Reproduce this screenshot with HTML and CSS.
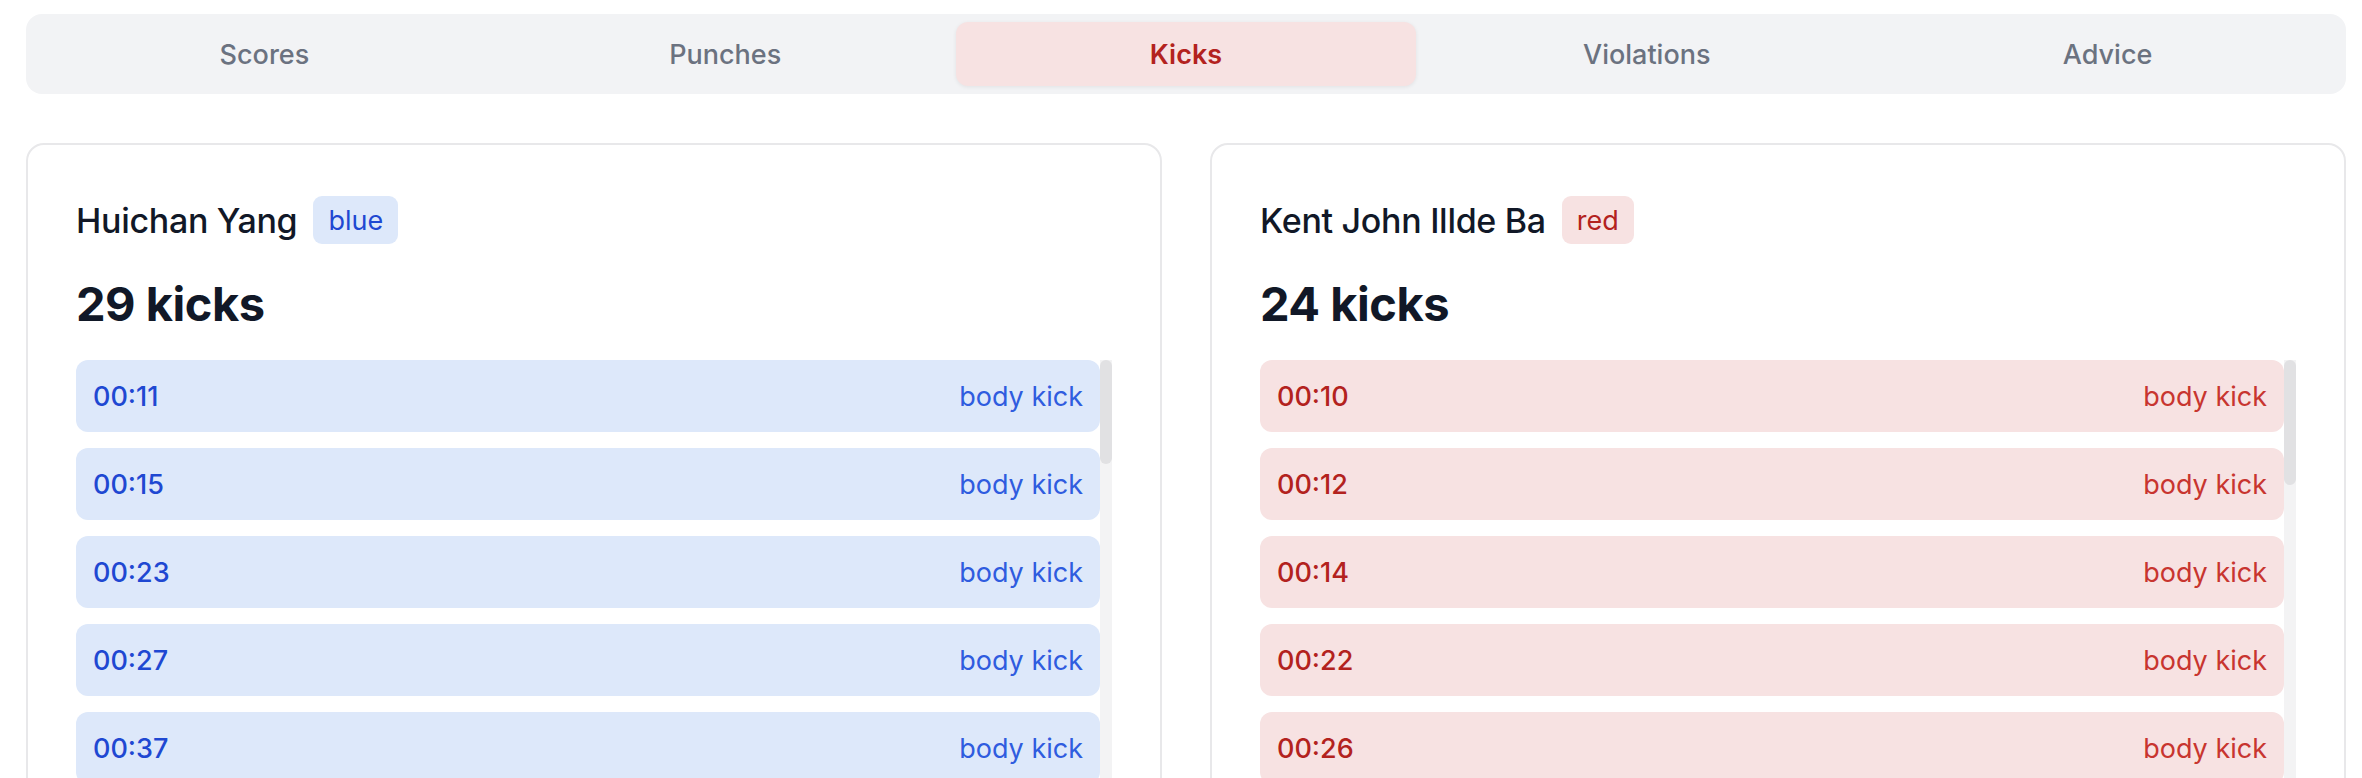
FILE: index.html
```html
<!DOCTYPE html>
<html lang="en">
<head>
<meta charset="utf-8">
<title>Kicks</title>
<link rel="stylesheet" href="styles.css">
</head>
<body>
<div class="page">
  <nav class="tabs">
    <div class="tab">Scores</div>
    <div class="tab">Punches</div>
    <div class="tab active">Kicks</div>
    <div class="tab">Violations</div>
    <div class="tab">Advice</div>
  </nav>

  <div class="cards">
    <section class="card blue">
      <div class="card-head">
        <span class="name">Huichan Yang</span>
        <span class="badge">blue</span>
      </div>
      <h2 class="count">29 kicks</h2>
      <div class="list-wrap">
        <ul class="list">
          <li class="row"><span class="time">00:11</span><span class="type">body kick</span></li>
          <li class="row"><span class="time">00:15</span><span class="type">body kick</span></li>
          <li class="row"><span class="time">00:23</span><span class="type">body kick</span></li>
          <li class="row"><span class="time">00:27</span><span class="type">body kick</span></li>
          <li class="row"><span class="time">00:37</span><span class="type">body kick</span></li>
          <li class="row"><span class="time">00:44</span><span class="type">body kick</span></li>
          <li class="row"><span class="time">00:52</span><span class="type">body kick</span></li>
          <li class="row"><span class="time">01:03</span><span class="type">body kick</span></li>
          <li class="row"><span class="time">01:09</span><span class="type">body kick</span></li>
          <li class="row"><span class="time">01:18</span><span class="type">body kick</span></li>
          <li class="row"><span class="time">01:26</span><span class="type">body kick</span></li>
          <li class="row"><span class="time">01:35</span><span class="type">body kick</span></li>
          <li class="row"><span class="time">01:41</span><span class="type">body kick</span></li>
          <li class="row"><span class="time">01:50</span><span class="type">body kick</span></li>
          <li class="row"><span class="time">01:58</span><span class="type">body kick</span></li>
          <li class="row"><span class="time">02:06</span><span class="type">body kick</span></li>
          <li class="row"><span class="time">02:13</span><span class="type">body kick</span></li>
          <li class="row"><span class="time">02:21</span><span class="type">body kick</span></li>
          <li class="row"><span class="time">02:30</span><span class="type">body kick</span></li>
          <li class="row"><span class="time">02:38</span><span class="type">body kick</span></li>
          <li class="row"><span class="time">02:45</span><span class="type">body kick</span></li>
          <li class="row"><span class="time">02:53</span><span class="type">body kick</span></li>
          <li class="row"><span class="time">03:02</span><span class="type">body kick</span></li>
          <li class="row"><span class="time">03:10</span><span class="type">body kick</span></li>
          <li class="row"><span class="time">03:17</span><span class="type">body kick</span></li>
          <li class="row"><span class="time">03:25</span><span class="type">body kick</span></li>
          <li class="row"><span class="time">03:34</span><span class="type">body kick</span></li>
          <li class="row"><span class="time">03:42</span><span class="type">body kick</span></li>
          <li class="row"><span class="time">03:51</span><span class="type">body kick</span></li>
        </ul>
        <div class="scrollbar" aria-hidden="true"><div class="thumb" style="height: 104px"></div></div>
      </div>
    </section>

    <section class="card red">
      <div class="card-head">
        <span class="name">Kent John Illde Ba</span>
        <span class="badge">red</span>
      </div>
      <h2 class="count">24 kicks</h2>
      <div class="list-wrap">
        <ul class="list">
          <li class="row"><span class="time">00:10</span><span class="type">body kick</span></li>
          <li class="row"><span class="time">00:12</span><span class="type">body kick</span></li>
          <li class="row"><span class="time">00:14</span><span class="type">body kick</span></li>
          <li class="row"><span class="time">00:22</span><span class="type">body kick</span></li>
          <li class="row"><span class="time">00:26</span><span class="type">body kick</span></li>
          <li class="row"><span class="time">00:35</span><span class="type">body kick</span></li>
          <li class="row"><span class="time">00:48</span><span class="type">body kick</span></li>
          <li class="row"><span class="time">00:59</span><span class="type">body kick</span></li>
          <li class="row"><span class="time">01:07</span><span class="type">body kick</span></li>
          <li class="row"><span class="time">01:15</span><span class="type">body kick</span></li>
          <li class="row"><span class="time">01:24</span><span class="type">body kick</span></li>
          <li class="row"><span class="time">01:33</span><span class="type">body kick</span></li>
          <li class="row"><span class="time">01:46</span><span class="type">body kick</span></li>
          <li class="row"><span class="time">01:54</span><span class="type">body kick</span></li>
          <li class="row"><span class="time">02:02</span><span class="type">body kick</span></li>
          <li class="row"><span class="time">02:17</span><span class="type">body kick</span></li>
          <li class="row"><span class="time">02:25</span><span class="type">body kick</span></li>
          <li class="row"><span class="time">02:36</span><span class="type">body kick</span></li>
          <li class="row"><span class="time">02:49</span><span class="type">body kick</span></li>
          <li class="row"><span class="time">02:57</span><span class="type">body kick</span></li>
          <li class="row"><span class="time">03:05</span><span class="type">body kick</span></li>
          <li class="row"><span class="time">03:19</span><span class="type">body kick</span></li>
          <li class="row"><span class="time">03:28</span><span class="type">body kick</span></li>
          <li class="row"><span class="time">03:40</span><span class="type">body kick</span></li>
        </ul>
        <div class="scrollbar" aria-hidden="true"><div class="thumb" style="height: 125px"></div></div>
      </div>
    </section>
  </div>
</div>
</body>
</html>
```

FILE: styles.css
```css
html, body {
  margin: 0;
  padding: 0;
  background: #ffffff;
  overflow: hidden;
}

body {
  font-family: Inter, "Noto Sans", "Liberation Sans", sans-serif;
  color: #111827;
}

.page {
  padding: 14px 16px 0 26px;
}

.tabs {
  display: grid;
  grid-template-columns: repeat(5, 1fr);
  height: 80px;
  box-sizing: border-box;
  padding: 8px;
  background: #f2f3f5;
  border-radius: 16px;
}

.tab {
  display: flex;
  align-items: center;
  justify-content: center;
  border-radius: 12px;
  font-size: 27px;
  font-weight: 500;
  color: #6b7280;
}

.tab.active {
  background: #f7e2e2;
  color: #b3221e;
  font-weight: 600;
  box-shadow: 0 1px 4px rgba(0, 0, 0, 0.07);
}

.cards {
  display: grid;
  grid-template-columns: 1fr 1fr;
  gap: 48px;
  margin-top: 49px;
}

.card {
  border: 2px solid #e8e8ea;
  border-radius: 18px;
  padding: 48px;
  background: #fff;
}

.card-head {
  display: flex;
  align-items: center;
  gap: 16px;
  height: 54px;
}

.name {
  font-size: 34px;
  font-weight: 500;
  color: #111827;
  letter-spacing: -0.3px;
}

.badge {
  display: inline-flex;
  align-items: center;
  height: 48px;
  padding: 0 15px;
  border-radius: 9px;
  font-size: 27px;
}

.count {
  margin: 33px 0 0;
  font-size: 47px;
  line-height: 48px;
  font-weight: 700;
  color: #111827;
  letter-spacing: -0.5px;
}

.list-wrap {
  display: flex;
  margin-top: 32px;
  height: 512px;
}

.list {
  flex: 1;
  list-style: none;
  margin: 0;
  padding: 0;
  overflow: hidden;
  display: flex;
  flex-direction: column;
  gap: 16px;
}

.scrollbar {
  flex: none;
  width: 12px;
  background: #f3f3f4;
}

.thumb {
  width: 12px;
  background: #e1e1e3;
  border-radius: 6px;
}

.row {
  flex: none;
  display: flex;
  align-items: center;
  justify-content: space-between;
  height: 72px;
  padding: 0 17px;
  border-radius: 12px;
  font-size: 27px;
}

.time {
  font-weight: 500;
}

.type {
  font-weight: 400;
}

.blue .badge,
.blue .row {
  background: #dde8fa;
}

.blue .badge,
.blue .time {
  color: #1f48d2;
}

.blue .type {
  color: #2f5cdf;
}

.red .badge,
.red .row {
  background: #f7e2e2;
}

.red .badge,
.red .time {
  color: #b3221e;
}

.red .type {
  color: #c8352f;
}
```
